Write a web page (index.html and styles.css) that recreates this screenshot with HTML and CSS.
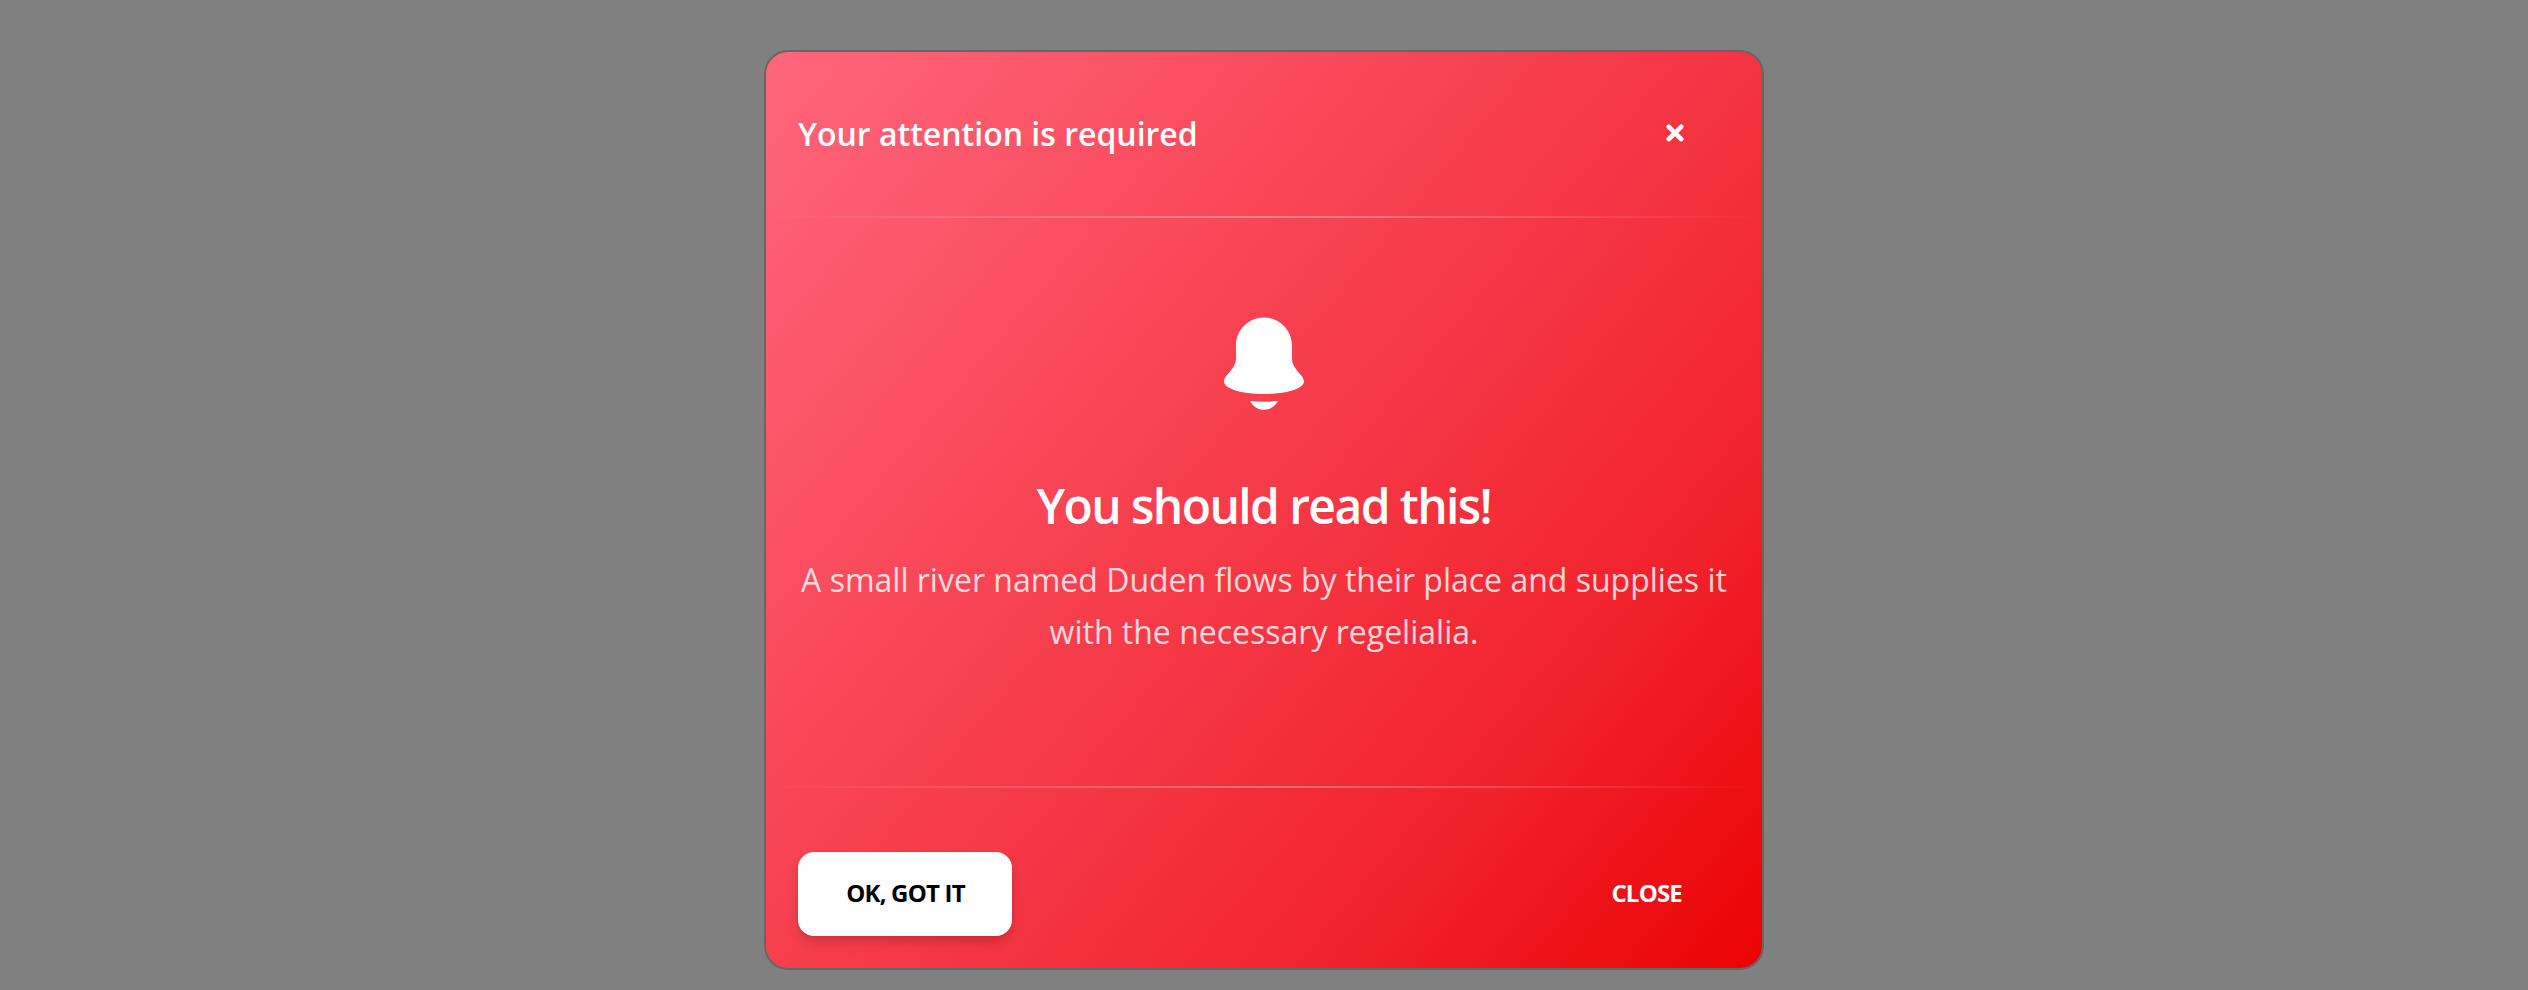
FILE: index.html
```html
<!DOCTYPE html>
<html lang="en">
<head>
<meta charset="utf-8">
<title>Your attention is required</title>
<link rel="stylesheet" href="styles.css">
</head>
<body>
<div class="modal" role="dialog">
  <header class="modal-header">
    <h6 class="modal-title">Your attention is required</h6>
    <button class="modal-dismiss" aria-label="Close">
      <svg viewBox="0 0 18 18" width="18" height="18"><path d="M2.800 2.800 15.200 15.200M15.200 2.800 2.800 15.200"/></svg>
    </button>
  </header>
  <hr class="rule">
  <main class="modal-body">
    <svg class="bell" viewBox="0 0 82 94" width="82" height="94">
      <path d="M41 .6C25.500 .6 13 13 13 28.500V41C13 53 1 57.500 1 64.500C1 71.500 18 77 41 77S81 71.500 81 64.500C81 57.500 69 53 69 41V28.500C69 13 56.500 .6 41 .6Z"/>
      <path d="M27 84Q41 85.500 55 84C52 89.500 47 92.800 41 92.800S30 89.500 27 84Z"/>
    </svg>
    <h4 class="heading">You should read this!</h4>
    <p class="message">A small river named Duden flows by their place and supplies it with the necessary regelialia.</p>
  </main>
  <hr class="rule">
  <footer class="modal-footer">
    <button class="btn btn-white">Ok, Got it</button>
    <button class="btn btn-link">Close</button>
  </footer>
</div>
</body>
</html>
```
FILE: styles.css
```css
* { box-sizing: border-box; }
body {
  margin: 0;
  height: 990px;
  padding-top: 50px;
  overflow: hidden;
  background: #808080;
  font-family: "Open Sans", sans-serif;
  color: #fff;
}
.modal {
  display: flex;
  flex-direction: column;
  width: 1000px;
  height: 920px;
  margin: 0 auto;
  border: 2px solid rgba(0, 0, 0, .2);
  border-radius: 24px;
  background: linear-gradient(130deg, #ff667c, #f1232d 75%, #ea0304) padding-box;
}
.modal-header {
  display: flex;
  align-items: center;
  justify-content: space-between;
  height: 164px;
  padding: 0 78px 0 32px;
}
.modal-title {
  margin: 0;
  font-size: 32px;
  line-height: 52px;
  font-weight: 600;
}
.modal-dismiss {
  display: flex;
  padding: 0 0 2px;
  border: 0;
  background: none;
}
.modal-dismiss path {
  stroke: #fff;
  stroke-width: 4.600;
  stroke-linecap: round;
}
.rule {
  width: 100%;
  height: 2px;
  margin: 0;
  border: 0;
  background: linear-gradient(90deg, transparent, rgba(255, 255, 255, .32), transparent);
}
.modal-body {
  display: flex;
  flex-direction: column;
  align-items: center;
  height: 568px;
  padding: 99px 32px 0;
  text-align: center;
}
.bell { fill: #fff; }
.heading {
  margin: 62px 0 0;
  font-size: 48px;
  line-height: 66px;
  font-weight: 600;
  letter-spacing: -1.6px;
}
.message {
  margin: 15px 0 0;
  font-size: 32px;
  line-height: 52px;
  font-weight: 400;
  opacity: .8;
}
.modal-footer {
  display: flex;
  align-items: center;
  justify-content: space-between;
  padding: 64px 32px 0;
}
.btn {
  height: 84px;
  padding: 0 48px 2px;
  border: 0;
  border-radius: 16px;
  font: 700 24px/34px "Open Sans", sans-serif;
  letter-spacing: -.8px;
  text-transform: uppercase;
  white-space: nowrap;
}
.btn-white {
  width: 214px;
  padding-right: 47px;
  background: #fff;
  color: #000;
  box-shadow: 0 8px 14px -2px rgba(0, 0, 0, .11), 0 4px 8px -2px rgba(0, 0, 0, .12);
}
.btn-link {
  background: none;
  color: #fff;
}
```
